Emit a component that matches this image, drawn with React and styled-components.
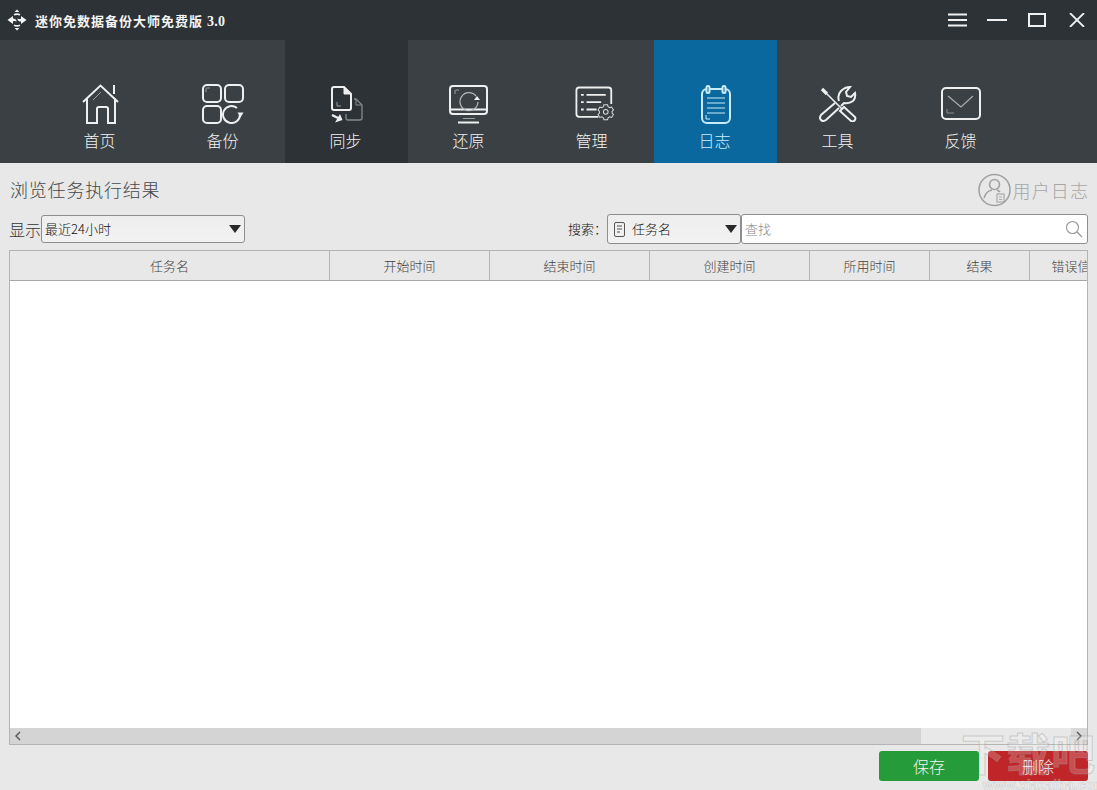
import React from 'react';
import styled, { createGlobalStyle } from 'styled-components';

const GlobalStyle = createGlobalStyle`
	html, body {
		margin: 0;
		padding: 0;
		background: #e8e8e8;
	}
	body {
		font-family: "Noto Sans CJK SC", "Liberation Sans", sans-serif;
		overflow: hidden;
	}
`;

const Page = styled.div`
	position: relative;
	width: 1097px;
	height: 790px;
	display: flex;
	flex-direction: column;
	overflow: hidden;
	background: #e8e8e8;
`;

const TitleBar = styled.div`
	height: 40px;
	flex: none;
	display: flex;
	align-items: center;
	padding-left: 7px;
	background: #2d3236;
`;

const AppName = styled.div`
	margin-left: 8px;
	flex: 1;
	font-size: 13px;
	font-weight: 700;
	letter-spacing: 1px;
	color: #f4f4f4;
	white-space: nowrap;
	span {
		font-family: "Liberation Serif", serif;
		font-size: 14px;
		letter-spacing: 0.3px;
	}
`;

const WindowButtons = styled.div`
	display: flex;
	align-items: center;
`;

const WindowButton = styled.div`
	width: 40px;
	height: 40px;
	display: flex;
	align-items: center;
	justify-content: center;
`;

const Nav = styled.div`
	height: 123px;
	flex: none;
	display: flex;
	padding-left: 39px;
	background: #3a4043;
`;

const Tab = styled.div`
	width: 123px;
	height: 123px;
	display: flex;
	flex-direction: column;
	align-items: center;
	padding: 42px 2px 0 0;
	box-sizing: border-box;
	color: ${props => props.active ? '#cdeefa' : '#f2f2f2'};
	background: ${props => props.active ? '#0b689f' : props.dark ? '#2d3236' : 'transparent'};
`;

const IconBox = styled.div`
	width: 44px;
	height: 44px;
	display: flex;
	align-items: center;
	justify-content: center;
`;

const TabLabel = styled.div`
	margin-top: 2px;
	font-size: 16px;
	font-weight: 300;
	line-height: 24px;
`;

const Main = styled.div`
	flex: 1;
	min-height: 0;
	display: flex;
	flex-direction: column;
	padding: 9px;
`;

const HeadRow = styled.div`
	height: 36px;
	flex: none;
	display: flex;
	align-items: center;
	justify-content: space-between;
`;

const Heading = styled.div`
	margin-left: 1px;
	padding-bottom: 2px;
	font-size: 18px;
	font-weight: 300;
	letter-spacing: 0.8px;
	color: #45494c;
`;

const UserLog = styled.div`
	display: flex;
	align-items: center;
	gap: 2px;
	margin-right: -1px;
	font-size: 18px;
	font-weight: 300;
	letter-spacing: 1.1px;
	color: #a6a6a6;
`;

const FilterRow = styled.div`
	height: 30px;
	margin-top: 6px;
	flex: none;
	display: flex;
	align-items: center;
`;

const ShowLabel = styled.div`
	width: 32px;
	font-size: 16px;
	font-weight: 300;
	color: #333;
`;

const Select = styled.div`
	width: ${props => props.width}px;
	height: ${props => props.tall ? 30 : 28}px;
	box-sizing: border-box;
	display: flex;
	align-items: center;
	padding: 0 3px 0 ${props => props.tall ? 6 : 3}px;
	border: 1px solid #8e8e8e;
	border-radius: 3px;
	background: linear-gradient(#eeeeee, #f2f2f2);
	font-size: 13px;
	font-weight: 300;
	color: #111;
`;

const SelectText = styled.div`
	flex: 1;
	padding-bottom: 2px;
	margin-left: ${props => props.indent ? 7 : 0}px;
`;

const Caret = styled.div`
	width: 0;
	height: 0;
	border-left: 6px solid transparent;
	border-right: 6px solid transparent;
	border-top: 8px solid #2a2a2a;
`;

const Spacer = styled.div`
	flex: 1;
`;

const SearchLabel = styled.div`
	padding-bottom: 2px;
	font-size: 13px;
	font-weight: 300;
	color: #111;
`;

const SearchBox = styled.div`
	width: 347px;
	height: 30px;
	box-sizing: border-box;
	display: flex;
	align-items: center;
	justify-content: space-between;
	padding: 0 4px 1px 3px;
	border: 1px solid #8e8e8e;
	border-radius: 3px;
	background: #fff;
	font-size: 13px;
	font-weight: 300;
	color: #8a8a8a;
`;

const Table = styled.div`
	width: 1079px;
	height: 495px;
	margin-top: 6px;
	flex: none;
	box-sizing: border-box;
	display: flex;
	flex-direction: column;
	border: 1px solid #b4b4b4;
	background: #fff;
`;

const HeaderRow = styled.div`
	height: 30px;
	flex: none;
	box-sizing: border-box;
	display: flex;
	overflow: hidden;
	border-bottom: 1px solid #a8a8a8;
	background: #e8e8e8;
`;

const HeaderCell = styled.div`
	width: ${props => props.width}px;
	flex: none;
	box-sizing: border-box;
	display: flex;
	align-items: center;
	justify-content: center;
	padding-bottom: 1px;
	border-right: 1px solid #b4b4b4;
	font-size: 13px;
	font-weight: 300;
	color: #444;
	white-space: nowrap;
`;

const TableBody = styled.div`
	flex: 1;
	background: #fff;
`;

const ScrollBar = styled.div`
	height: 16px;
	flex: none;
	display: flex;
	background: #e8e8e8;
`;

const ScrollThumb = styled.div`
	width: 911px;
	display: flex;
	align-items: center;
	padding-left: 4px;
	box-sizing: border-box;
	background: #d4d4d4;
`;

const ScrollEnd = styled.div`
	width: 16px;
	margin-left: auto;
	display: flex;
	align-items: center;
	justify-content: center;
	background: #d8d8d8;
`;

const Footer = styled.div`
	margin-top: 6px;
	flex: none;
	display: flex;
	justify-content: flex-end;
	gap: 9px;
`;

const Button = styled.div`
	width: 100px;
	height: 30px;
	display: flex;
	align-items: center;
	justify-content: center;
	border-radius: 3px;
	font-size: 16px;
	font-weight: 300;
	color: #f4f4f4;
	background: ${props => props.danger ? '#c02629' : '#259b3a'};
`;

const Watermark = styled.div`
	position: absolute;
	left: 961px;
	top: 726px;
	width: 136px;
	pointer-events: none;
`;

const WatermarkTitle = styled.div`
	font-size: 44px;
	font-weight: 700;
	line-height: 52px;
	letter-spacing: 1px;
	white-space: nowrap;
	color: rgba(255, 255, 255, 0.2);
	-webkit-text-stroke: 1px rgba(150, 150, 150, 0.4);
`;

const WatermarkUrl = styled.div`
	margin: -1px 0 0 22px;
	font-family: "Liberation Sans", sans-serif;
	font-size: 14px;
	font-weight: 700;
	line-height: 16px;
	white-space: nowrap;
	color: rgba(255, 255, 255, 0.3);
	-webkit-text-stroke: 0.5px rgba(150, 150, 150, 0.4);
`;

const Logo = () => (
	<svg width="20" height="22" viewBox="0 0 20 22" fill="#f4f4f4" stroke="none">
		<path d="M10 0.5l2.4 2.4h-4.8z" />
		<path d="M7 5.8Q10 4.4 13 5.8" fill="none" stroke="#f4f4f4" strokeWidth="1.8" />
		<path d="M0.5 11L6 7V9.4Q9 9.4 9.8 12.6Q8 11.6 6 12.2V15Z" />
		<path d="M19.5 11L14 15V12.6Q11 12.6 10.2 9.4Q12 10.4 14 9.8V7Z" />
		<path d="M7 16.2Q10 17.6 13 16.2" fill="none" stroke="#f4f4f4" strokeWidth="1.8" />
		<path d="M7.6 19.1h4.8l-2.4 2.4z" />
	</svg>
);

const MenuIcon = () => (
	<svg width="19" height="14" viewBox="0 0 19 14" stroke="#f0f0f0" strokeWidth="2">
		<path d="M0 1.5h19M0 7h19M0 12.5h19" />
	</svg>
);

const MinIcon = () => (
	<svg width="20" height="14" viewBox="0 0 20 14" stroke="#f0f0f0" strokeWidth="2">
		<path d="M0 7h20" />
	</svg>
);

const MaxIcon = () => (
	<svg width="18" height="14" viewBox="0 0 18 14" fill="none" stroke="#f0f0f0" strokeWidth="2">
		<rect x="1" y="1" width="16" height="12" />
	</svg>
);

const CloseIcon = () => (
	<svg width="16" height="14" viewBox="0 0 16 14" fill="none" stroke="#f0f0f0" strokeWidth="1.8">
		<path d="M1 0l14 14M15 0L1 14" />
	</svg>
);

const HomeIcon = () => (
	<svg width="40" height="40" viewBox="-2 0 40 40" fill="none" stroke="#efefef" strokeWidth="2">
		<path d="M1 18 L18.5 1.5 L36 18" />
		<path d="M32 1v9" />
		<path d="M5 14.5V39H15V24.5Q15 23 17 23H24Q26 23 26 24.5V39H33V14.5" />
		<path d="M11 16L19 8" stroke="#9a9fa2" strokeWidth="1" />
	</svg>
);

const BackupIcon = () => (
	<svg width="42" height="40" viewBox="0 0 42 40" fill="none" stroke="#efefef" strokeWidth="2">
		<rect x="1" y="1" width="18" height="17" rx="4" />
		<rect x="23" y="1" width="18" height="17" rx="4" />
		<rect x="1" y="22" width="18" height="17" rx="4" />
		<path d="M38 30.5A8.5 8.5 0 1 1 35 24" />
		<path d="M35.5 28.5h6l-3 5z" fill="#efefef" stroke="none" />
		<path d="M4 8V5Q4 4 5 4H8" stroke="#9a9fa2" strokeWidth="1" />
	</svg>
);

const SyncIcon = () => (
	<svg width="36" height="38" viewBox="0 0 36 38" fill="none" stroke="#efefef" strokeWidth="2">
		<path d="M6 2H16L23 9V23Q23 25 21 25H6Q4 25 4 23V4Q4 2 6 2Z" />
		<path d="M16 2V9H23Z" fill="#efefef" strokeWidth="1" />
		<path d="M9 17v4h4" stroke="#9a9fa2" strokeWidth="1" />
		<path d="M26 14H28L34 20V33Q34 35 32 35H20Q18 35 18 33V29" stroke="#858a8d" strokeWidth="1.3" />
		<path d="M28 14V20H34" stroke="#858a8d" strokeWidth="1" />
		<path d="M4 30L10 33" strokeWidth="2.4" />
		<path d="M7 37.5L14.5 35L12 29Z" fill="#efefef" stroke="none" />
	</svg>
);

const RestoreIcon = () => (
	<svg width="40" height="39" viewBox="0 0 40 39" fill="none" stroke="#efefef" strokeWidth="2">
		<rect x="1" y="1" width="37" height="28" rx="3" />
		<path d="M1 24.5H38" />
		<path d="M9 37.5H30" />
		<path d="M14 33.5H26" strokeWidth="1" stroke="#9a9fa2" />
		<path d="M6 9V6Q6 5 7 5H10" strokeWidth="1" stroke="#9a9fa2" />
		<path d="M27 11A9 9 0 1 0 29 17" strokeWidth="1.2" stroke="#b5babc" />
		<path d="M25 15h6l-3-4z" fill="#efefef" stroke="none" />
	</svg>
);

const ManageIcon = () => (
	<svg width="48" height="38" viewBox="0 0 48 38" fill="none" stroke="#efefef" strokeWidth="2">
		<g transform="translate(6 0)">
			<path d="M25 33H4Q1 33 1 30V4Q1 1 4 1H36Q39 1 39 4V19" />
			<path d="M6 9h3M12 9h21M6 17h3M12 17h16M6 25h3M12 25h11" />
			<g strokeWidth="1.4" stroke="#d8d8d8" transform="translate(33 27.5) scale(0.8) translate(-33 -27)">
				<circle cx="33" cy="27" r="3.2" />
				<path d="M30.5 17.5h5l.7 2.6 2.3 1.2 2.6-.8 2.4 4-1.9 1.9v2.4l1.9 1.9-2.4 4-2.6-.8-2.3 1.2-.7 2.6h-5l-.7-2.6-2.3-1.2-2.6.8-2.4-4 1.9-1.9V26.4l-1.9-1.9 2.4-4 2.6.8 2.3-1.2z" />
			</g>
		</g>
	</svg>
);

const LogIcon = () => (
	<svg width="32" height="39" viewBox="-2 0 32 39" fill="none" stroke="#c7ecf8" strokeWidth="2">
		<rect x="1" y="4" width="28" height="34" rx="5" />
		<rect x="5.5" y="1" width="3" height="7" rx="1.5" fill="#0b689f" />
		<rect x="21.5" y="1" width="3" height="7" rx="1.5" fill="#0b689f" />
		<path d="M6 13h18M6 18h18M6 23h18M6 28h18" strokeWidth="1" />
		<path d="M5 30v4h4" strokeWidth="1" />
	</svg>
);

const ToolsIcon = () => (
	<svg width="38" height="36" viewBox="0 0 38 36" fill="none" stroke="#efefef" strokeWidth="2">
		<path d="M3 3L8 8" strokeWidth="3.2" />
		<path d="M8 8L23 23" strokeWidth="1.6" />
		<path d="M25 21L36 31Q37 33 35.5 34.5Q34 36 32 35L21 25Z" />
		<path d="M16 17L2 29Q0 32 2 34Q4 36 7 34L20 22" />
		<path d="M20 15Q18 9 22 5Q26 1 31 1L27 6L28 10L32 11L36 7Q37 12 34 15Q30 18 25 17L22 20" />
	</svg>
);

const FeedbackIcon = () => (
	<svg width="40" height="34" viewBox="0 0 40 34" fill="none" stroke="#efefef" strokeWidth="2">
		<rect x="1" y="1" width="38" height="31" rx="4" />
		<path d="M7 9L20 20L32 9" stroke="#a8adaf" strokeWidth="1.2" />
		<path d="M6 22v4h7" stroke="#8d9295" strokeWidth="1" />
	</svg>
);

const UserIcon = () => (
	<svg width="33" height="34" viewBox="0 0 33 34" fill="none" stroke="#a2a2a2" strokeWidth="1.6">
		<circle cx="16.5" cy="17" r="15.5" />
		<circle cx="16.5" cy="11.5" r="5" />
		<path d="M6 25Q8 18 14 17" />
		<path d="M19 17Q21 18 22 19" />
		<rect x="19" y="21" width="7" height="8" strokeWidth="1.1" />
		<path d="M21 24h3M21 26.5h3" strokeWidth="0.9" />
	</svg>
);

const DocIcon = () => (
	<svg width="11" height="15" viewBox="0 0 11 15" fill="none" stroke="#555" strokeWidth="1">
		<rect x="0.5" y="0.5" width="10" height="14" rx="1.5" />
		<path d="M3 4h5M3 7h5M3 10h3" />
	</svg>
);

const SearchIcon = () => (
	<svg width="18" height="18" viewBox="0 0 18 18" fill="none" stroke="#9a9a9a" strokeWidth="1.2">
		<circle cx="7.5" cy="7.5" r="6" />
		<path d="M12 12l5 5" />
	</svg>
);

const ChevronLeft = () => (
	<svg width="7" height="10" viewBox="0 0 7 10" fill="none" stroke="#555" strokeWidth="1.4">
		<path d="M6 1L2 5l4 4" />
	</svg>
);

const ChevronRight = () => (
	<svg width="7" height="10" viewBox="0 0 7 10" fill="none" stroke="#555" strokeWidth="1.4">
		<path d="M1 1l4 4-4 4" />
	</svg>
);

const tabs = [
	{ label: '首页', icon: <HomeIcon /> },
	{ label: '备份', icon: <BackupIcon /> },
	{ label: '同步', icon: <SyncIcon />, dark: true },
	{ label: '还原', icon: <RestoreIcon /> },
	{ label: '管理', icon: <ManageIcon /> },
	{ label: '日志', icon: <LogIcon />, active: true },
	{ label: '工具', icon: <ToolsIcon /> },
	{ label: '反馈', icon: <FeedbackIcon /> },
];

const columns = [
	{ label: '任务名', width: 320 },
	{ label: '开始时间', width: 160 },
	{ label: '结束时间', width: 160 },
	{ label: '创建时间', width: 160 },
	{ label: '所用时间', width: 120 },
	{ label: '结果', width: 100 },
	{ label: '错误信息', width: 96 },
];

const App = () => (
	<Page>
		<GlobalStyle />
		<TitleBar>
			<Logo />
			<AppName>迷你免数据备份大师免费版 <span>3.0</span></AppName>
			<WindowButtons>
				<WindowButton><MenuIcon /></WindowButton>
				<WindowButton><MinIcon /></WindowButton>
				<WindowButton><MaxIcon /></WindowButton>
				<WindowButton><CloseIcon /></WindowButton>
			</WindowButtons>
		</TitleBar>
		<Nav>
			{tabs.map((tab) => (
				<Tab key={tab.label} active={tab.active} dark={tab.dark}>
					<IconBox>{tab.icon}</IconBox>
					<TabLabel>{tab.label}</TabLabel>
				</Tab>
			))}
		</Nav>
		<Main>
			<HeadRow>
				<Heading>浏览任务执行结果</Heading>
				<UserLog><UserIcon />用户日志</UserLog>
			</HeadRow>
			<FilterRow>
				<ShowLabel>显示</ShowLabel>
				<Select width={204}>
					<SelectText>最近24小时</SelectText>
					<Caret />
				</Select>
				<Spacer />
				<SearchLabel>搜索：</SearchLabel>
				<Select width={134} tall>
					<DocIcon />
					<SelectText indent>任务名</SelectText>
					<Caret />
				</Select>
				<SearchBox>
					查找
					<SearchIcon />
				</SearchBox>
			</FilterRow>
			<Table>
				<HeaderRow>
					{columns.map((col) => (
						<HeaderCell key={col.label} width={col.width}>{col.label}</HeaderCell>
					))}
				</HeaderRow>
				<TableBody />
				<ScrollBar>
					<ScrollThumb><ChevronLeft /></ScrollThumb>
					<ScrollEnd><ChevronRight /></ScrollEnd>
				</ScrollBar>
			</Table>
			<Footer>
				<Button>保存</Button>
				<Button danger>删除</Button>
			</Footer>
		</Main>
		<Watermark>
			<WatermarkTitle>下载吧</WatermarkTitle>
			<WatermarkUrl>www.xiazaiba.com</WatermarkUrl>
		</Watermark>
	</Page>
);

export default App;
